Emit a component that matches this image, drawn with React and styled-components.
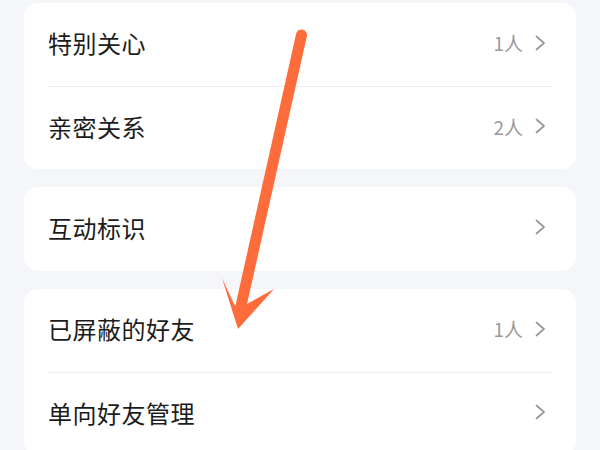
import React from 'react'
import styled, {createGlobalStyle} from 'styled-components'

const GlobalStyle = createGlobalStyle`
    html, body {
        margin: 0;
        padding: 0;
        background: #f5f6fa;
    }
    body {
        font-family: "Noto Sans CJK SC", "Noto Sans", sans-serif;
    }
`

const Page = styled.div`
    position: relative;
    width: 600px;
    height: 450px;
    overflow: hidden;
    background: #f5f6fa;
    padding: 3px 24px 0;
    box-sizing: border-box;
    display: flex;
    flex-direction: column;
    gap: 18px;
`

const Card = styled.div`
    background: #ffffff;
    border-radius: 14px;
    padding: 0 24px;
    display: flex;
    flex-direction: column;
    flex-shrink: 0;
`

const Row = styled.div`
    height: ${props => props.tall ? 84 : 83}px;
    display: flex;
    align-items: center;
    justify-content: space-between;
    border-top: ${props => props.first ? "none" : "1px solid #efefef"};
    box-sizing: border-box;
    padding-bottom: 4px;
`

const Label = styled.span`
    font-size: 24px;
    color: #1c1c1c;
    letter-spacing: 0.5px;
`

const Right = styled.div`
    display: flex;
    align-items: center;
    gap: 12px;
    padding-right: 6px;
`

const Count = styled.span`
    font-size: 19px;
    color: #9a9a9a;
`

const Chevron = () => (
    <svg width="11" height="16" viewBox="0 0 11 16">
        <polyline points="1.5,1.5 9,8 1.5,14.5" fill="none" stroke="#999" strokeWidth="1.8" strokeLinecap="round" strokeLinejoin="round" />
    </svg>
)

// the orange pointer drawn over the list
const Overlay = styled.svg`
    position: absolute;
    left: 0;
    top: 0;
    pointer-events: none;
`

const Arrow = () => (
    <Overlay width="600" height="450" viewBox="0 0 600 450">
        <line x1="301.5" y1="35" x2="241" y2="306" stroke="#ff6c3c" strokeWidth="11" strokeLinecap="round" />
        <polygon points="238,329 222,278 235,306 247,304 274,289" fill="#ff6c3c" />
    </Overlay>
)

const groups = [
    [{label: "特别关心", count: "1人"}, {label: "亲密关系", count: "2人"}],
    [{label: "互动标识"}],
    [{label: "已屏蔽的好友", count: "1人"}, {label: "单向好友管理"}],
]

const App = () => {
    return (
        <>
            <GlobalStyle />
            <Page>
                {groups.map((rows, g) => (
                    <Card key={g}>
                        {rows.map((item, i) => (
                            <Row key={item.label} first={i === 0} tall={g === 1}>
                                <Label>{item.label}</Label>
                                <Right>
                                    {item.count && <Count>{item.count}</Count>}
                                    <Chevron />
                                </Right>
                            </Row>
                        ))}
                    </Card>
                ))}
                <Arrow />
            </Page>
        </>
    )
}

export default App
